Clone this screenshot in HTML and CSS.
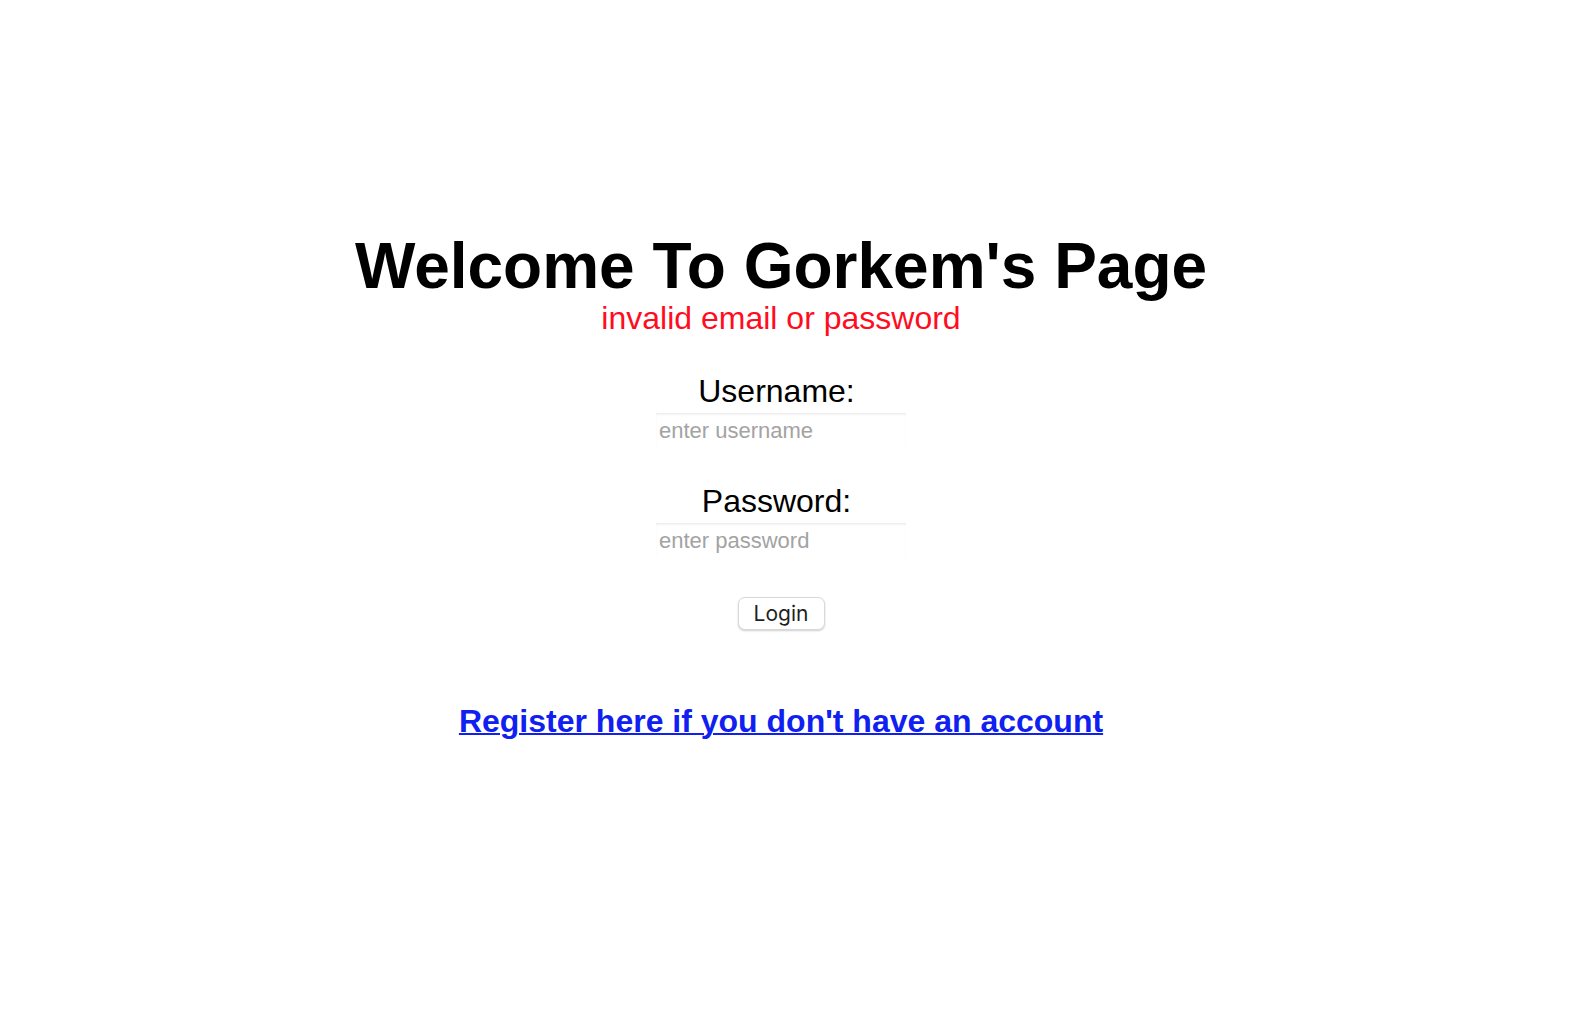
FILE: index.html
```html
<!DOCTYPE html>
<html>
<head>
<meta charset="utf-8">
<title>Login</title>
<link rel="stylesheet" href="styles.css">
</head>
<body>
<main class="page">
  <h1 class="title">Welcome To Gorkem's Page</h1>
  <p class="error">invalid email or password</p>
  <form class="form">
    <label class="label" for="username">Username:</label>
    <input class="field" id="username" type="text" placeholder="enter username">
    <label class="label label-pw" for="password">Password:</label>
    <input class="field" id="password" type="password" placeholder="enter password">
    <button class="btn" type="button">Login</button>
  </form>
  <a class="register" href="#">Register here if you don't have an account</a>
</main>
</body>
</html>
```

FILE: styles.css
```css
html, body {
  margin: 0;
  padding: 0;
  background: #ffffff;
}
body {
  font-family: "Liberation Sans", Arial, Helvetica, sans-serif;
  color: #000;
}
.page {
  display: flex;
  flex-direction: column;
  align-items: center;
  text-align: center;
  padding-top: 230px;
  padding-right: 16px;
}
.title {
  margin: 0;
  font-size: 64px;
  font-weight: bold;
  line-height: 1.15;
}
.error {
  margin: -4px 0 0;
  font-size: 32px;
  line-height: 1.15;
  color: #ff0d1e;
}
.form {
  display: flex;
  flex-direction: column;
  align-items: center;
  margin-top: 37px;
}
.label {
  display: block;
  padding-right: 9px;
  font-size: 32px;
  line-height: 1.15;
}
.label-pw {
  margin-top: 37px;
}
.field {
  box-sizing: border-box;
  width: 250px;
  height: 33px;
  margin-top: 3px;
  padding: 3px 3px 0;
  border: none;
  outline: none;
  background: #fff;
  box-shadow: inset 0 3px 3px -2px rgba(0,0,0,0.10), inset 1px 0 2px -1px rgba(0,0,0,0.04), inset -1px 0 2px -1px rgba(0,0,0,0.04);
  font-family: "Liberation Sans", Arial, sans-serif;
  font-size: 22px;
  color: #000;
}
.field::placeholder {
  color: #a3a3a3;
}
.btn {
  margin-top: 41px;
  box-sizing: border-box;
  width: 87px;
  height: 33px;
  padding: 0;
  border: 1px solid #d9d9d9;
  border-radius: 7px;
  background: #fff;
  box-shadow: 0 1px 2px rgba(0,0,0,0.2);
  font-family: Inter, "Open Sans", sans-serif;
  font-size: 21px;
  color: #1f1f1f;
}
.register {
  margin-top: 73px;
  font-size: 32px;
  font-weight: bold;
  line-height: 1.15;
  color: #1020f0;
  text-decoration: underline;
  text-decoration-thickness: 2px;
}
```
